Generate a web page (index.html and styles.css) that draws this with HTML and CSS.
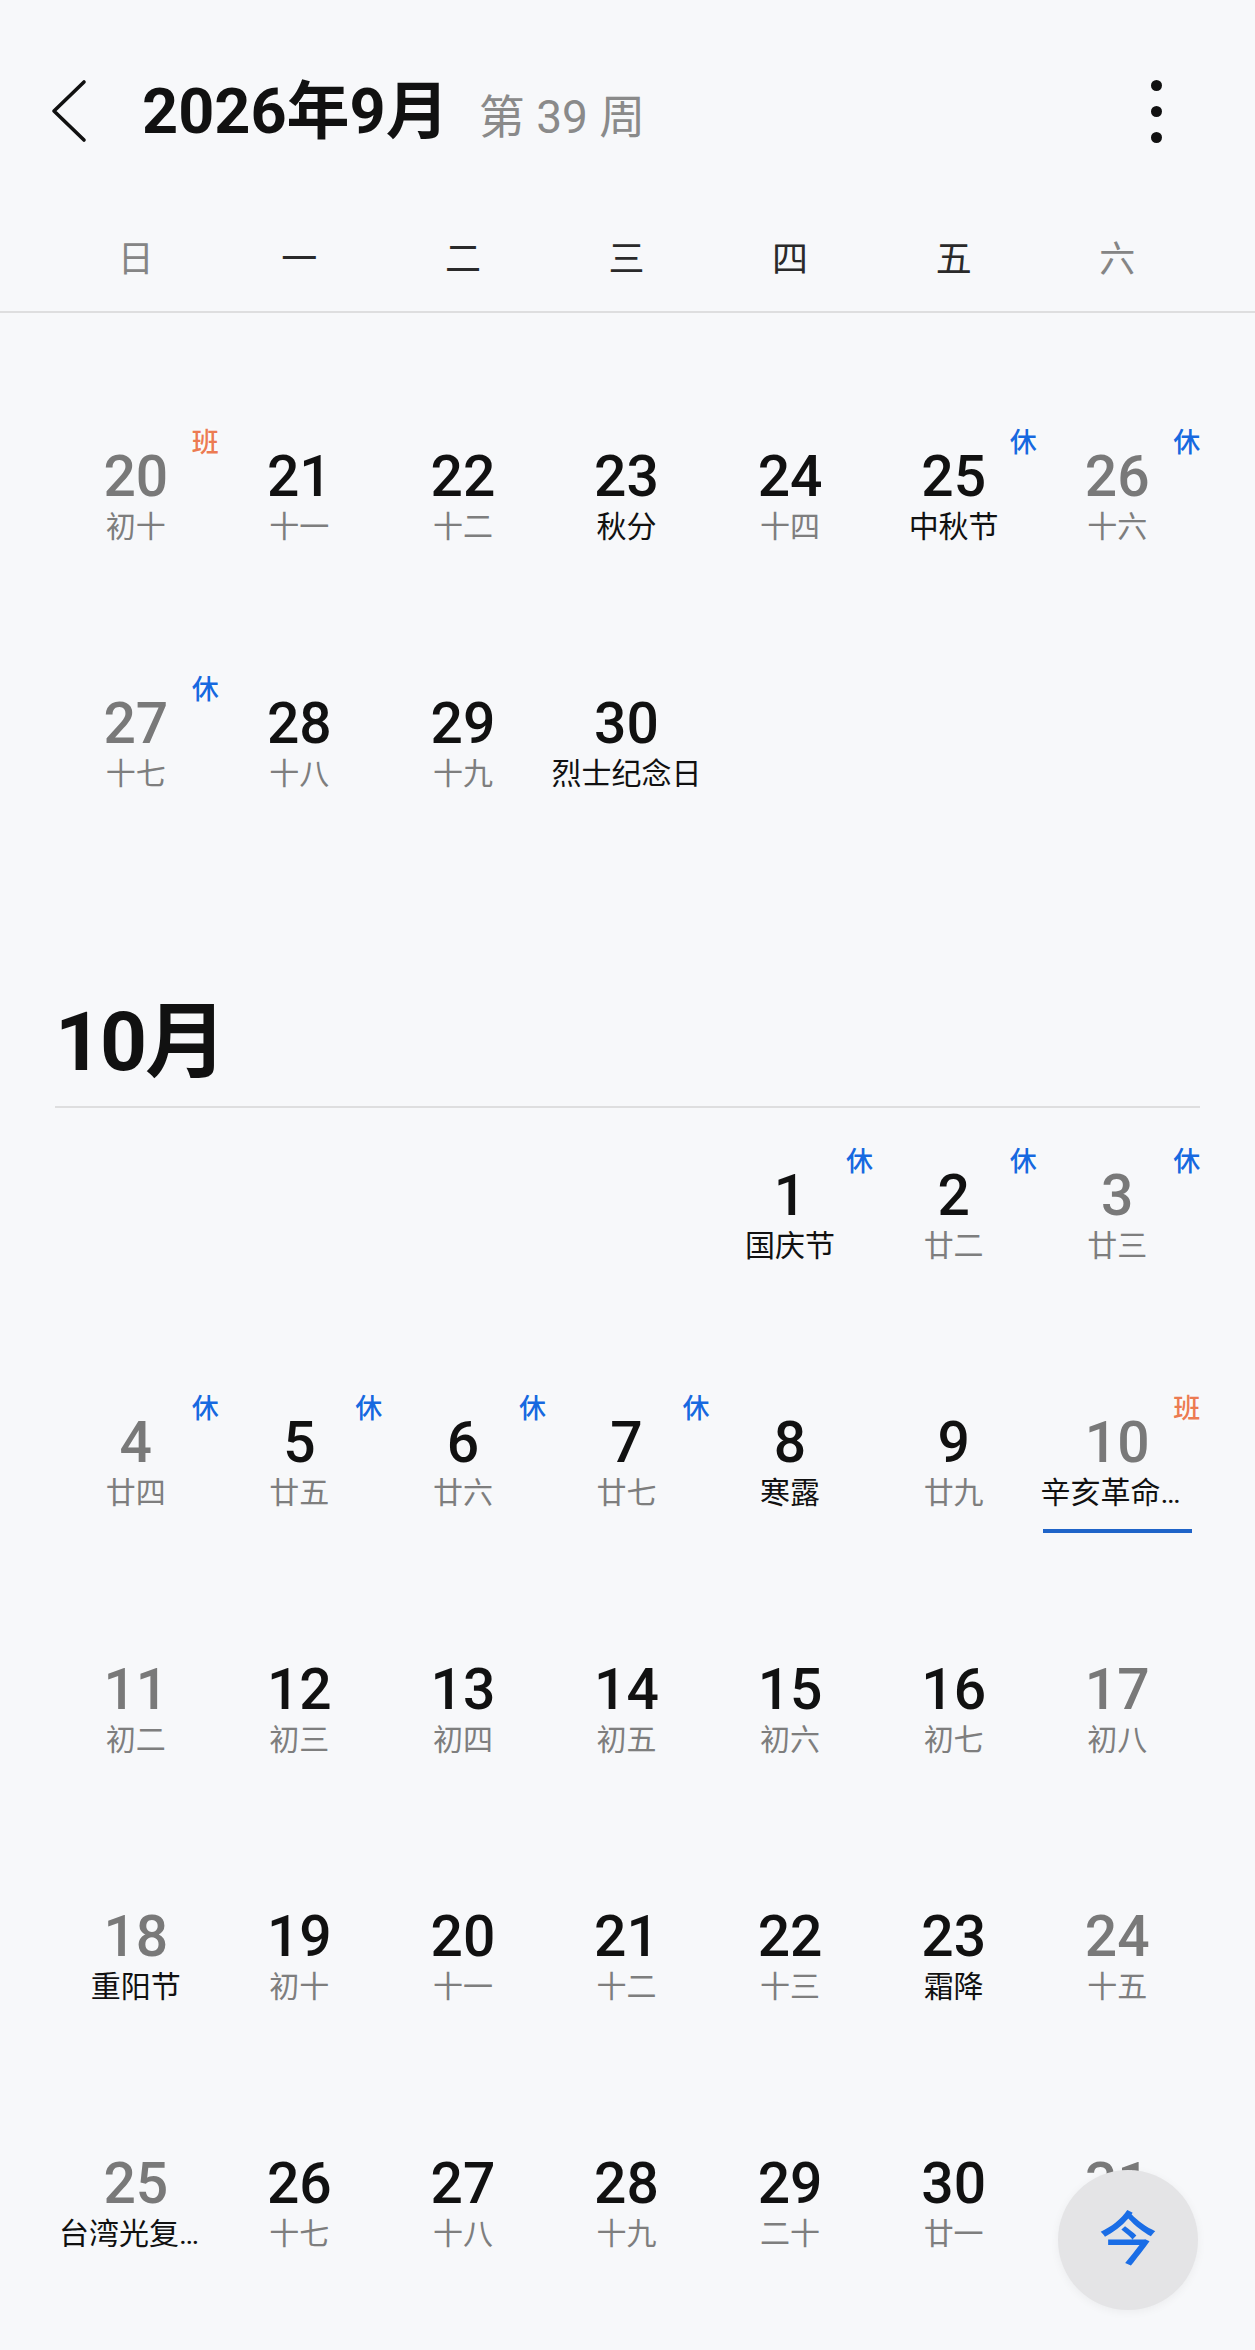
FILE: index.html
```html
<!DOCTYPE html>
<html lang="zh-CN">
<head>
<meta charset="utf-8">
<title>日历</title>
<link rel="stylesheet" href="styles.css">
</head>
<body>
<header class="topbar">
  <div class="back" aria-label="返回">
    <svg width="36" height="64" viewBox="0 0 36 64"><polyline points="33,3 3,32 33,61" fill="none" stroke="#111" stroke-width="3.6" stroke-linecap="round" stroke-linejoin="round"/></svg>
  </div>
  <div class="title-group">
    <h1 class="title">2026年9月</h1>
    <span class="week">第 39 周</span>
  </div>
  <div class="more" aria-label="更多"><span class="dot"></span><span class="dot"></span><span class="dot"></span></div>
</header>

<div class="weekdays">
  <div class="wd off">日</div><div class="wd">一</div><div class="wd">二</div><div class="wd">三</div><div class="wd">四</div><div class="wd">五</div><div class="wd off">六</div>
</div>

<section class="month month-sep">
  <div class="grid">
    <div class="cell"><span class="badge work">班</span><div class="num off">20</div><div class="lunar">初十</div></div>
    <div class="cell"><div class="num">21</div><div class="lunar">十一</div></div>
    <div class="cell"><div class="num">22</div><div class="lunar">十二</div></div>
    <div class="cell"><div class="num">23</div><div class="lunar fest">秋分</div></div>
    <div class="cell"><div class="num">24</div><div class="lunar">十四</div></div>
    <div class="cell"><span class="badge rest">休</span><div class="num">25</div><div class="lunar fest">中秋节</div></div>
    <div class="cell"><span class="badge rest">休</span><div class="num off">26</div><div class="lunar">十六</div></div>

    <div class="cell"><span class="badge rest">休</span><div class="num off">27</div><div class="lunar">十七</div></div>
    <div class="cell"><div class="num">28</div><div class="lunar">十八</div></div>
    <div class="cell"><div class="num">29</div><div class="lunar">十九</div></div>
    <div class="cell"><div class="num">30</div><div class="lunar fest">烈士纪念日</div></div>
    <div class="cell"></div>
    <div class="cell"></div>
    <div class="cell"></div>
  </div>
</section>

<section class="month month-oct">
  <h2 class="month-title">10月</h2>
  <div class="grid">
    <div class="cell"></div>
    <div class="cell"></div>
    <div class="cell"></div>
    <div class="cell"></div>
    <div class="cell"><span class="badge rest">休</span><div class="num">1</div><div class="lunar fest">国庆节</div></div>
    <div class="cell"><span class="badge rest">休</span><div class="num">2</div><div class="lunar">廿二</div></div>
    <div class="cell"><span class="badge rest">休</span><div class="num off">3</div><div class="lunar">廿三</div></div>

    <div class="cell"><span class="badge rest">休</span><div class="num off">4</div><div class="lunar">廿四</div></div>
    <div class="cell"><span class="badge rest">休</span><div class="num">5</div><div class="lunar">廿五</div></div>
    <div class="cell"><span class="badge rest">休</span><div class="num">6</div><div class="lunar">廿六</div></div>
    <div class="cell"><span class="badge rest">休</span><div class="num">7</div><div class="lunar">廿七</div></div>
    <div class="cell"><div class="num">8</div><div class="lunar fest">寒露</div></div>
    <div class="cell"><div class="num">9</div><div class="lunar">廿九</div></div>
    <div class="cell selected"><span class="badge work">班</span><div class="num off">10</div><div class="lunar fest">辛亥革命纪念日</div><div class="mark"></div></div>

    <div class="cell"><div class="num off">11</div><div class="lunar">初二</div></div>
    <div class="cell"><div class="num">12</div><div class="lunar">初三</div></div>
    <div class="cell"><div class="num">13</div><div class="lunar">初四</div></div>
    <div class="cell"><div class="num">14</div><div class="lunar">初五</div></div>
    <div class="cell"><div class="num">15</div><div class="lunar">初六</div></div>
    <div class="cell"><div class="num">16</div><div class="lunar">初七</div></div>
    <div class="cell"><div class="num off">17</div><div class="lunar">初八</div></div>

    <div class="cell"><div class="num off">18</div><div class="lunar fest">重阳节</div></div>
    <div class="cell"><div class="num">19</div><div class="lunar">初十</div></div>
    <div class="cell"><div class="num">20</div><div class="lunar">十一</div></div>
    <div class="cell"><div class="num">21</div><div class="lunar">十二</div></div>
    <div class="cell"><div class="num">22</div><div class="lunar">十三</div></div>
    <div class="cell"><div class="num">23</div><div class="lunar fest">霜降</div></div>
    <div class="cell"><div class="num off">24</div><div class="lunar">十五</div></div>

    <div class="cell"><div class="num off">25</div><div class="lunar fest">台湾光复纪念日</div></div>
    <div class="cell"><div class="num">26</div><div class="lunar">十七</div></div>
    <div class="cell"><div class="num">27</div><div class="lunar">十八</div></div>
    <div class="cell"><div class="num">28</div><div class="lunar">十九</div></div>
    <div class="cell"><div class="num">29</div><div class="lunar">二十</div></div>
    <div class="cell"><div class="num">30</div><div class="lunar">廿一</div></div>
    <div class="cell"><div class="num off">31</div><div class="lunar">廿二</div></div>
  </div>
</section>

<div class="today">今</div>
</body>
</html>
```

FILE: styles.css
```css
html, body {
  margin: 0;
  padding: 0;
}
body {
  background: #f7f8fa;
  width: 1255px;
  height: 2350px;
  position: relative;
  overflow: hidden;
  font-family: Roboto, "Noto Sans CJK SC", sans-serif;
  color: #111;
}

/* top bar */
.topbar {
  display: flex;
  align-items: center;
  height: 222px;
  padding-left: 51px;
  box-sizing: border-box;
}
.back {
  width: 36px;
  height: 64px;
  display: flex;
}
.title-group {
  display: flex;
  align-items: baseline;
  margin-left: 55px;
}
.title {
  margin: 0;
  font-size: 63px;
  font-weight: 700;
  line-height: 1;
  color: #111;
}
.week {
  margin-left: 30px;
  font-size: 46px;
  line-height: 1;
  color: #8a8a8a;
}
.more {
  margin-left: auto;
  margin-right: 93px;
  display: flex;
  flex-direction: column;
  gap: 15px;
}
.dot {
  width: 11px;
  height: 11px;
  border-radius: 50%;
  background: #111;
}

/* weekday header */
.weekdays {
  display: grid;
  grid-template-columns: repeat(7, 1fr);
  padding: 14px 56px 27px 54px;
  border-bottom: 2px solid #dededf;
}
.wd {
  text-align: center;
  font-size: 36px;
  line-height: 48px;
  color: #2a2a2a;
}
.wd.off {
  color: #858585;
}

/* month grids */
.month-sep {
  padding-top: 76px;
}
.grid {
  display: grid;
  grid-template-columns: repeat(7, 1fr);
  grid-auto-rows: 247px;
  padding: 0 56px 0 54px;
}
.cell {
  position: relative;
  padding-top: 58px;
  box-sizing: border-box;
  text-align: center;
  min-width: 0;
}
.num {
  font-size: 57px;
  font-weight: 500;
  line-height: 60px;
  color: #111;
}
.num.off {
  color: #797979;
}
.lunar {
  font-size: 30px;
  line-height: 40px;
  color: #7e7e7e;
  white-space: nowrap;
  overflow: hidden;
  text-overflow: ellipsis;
  padding: 0 5px;
}
.lunar.fest {
  color: #111;
}
.badge {
  position: absolute;
  top: 39px;
  left: calc(50% + 56px);
  font-size: 27px;
  line-height: 30px;
  font-weight: 500;
  text-shadow: 0 0 5px rgba(255, 255, 255, 0.9);
}
.badge.rest {
  color: #1769e0;
}
.badge.work {
  color: #ec7b52;
}
.mark {
  width: 149px;
  height: 4px;
  margin: 16px auto 0;
  background: #1f64c8;
}

.month-title {
  margin: 0 55px;
  padding: 109px 0 14px;
  font-size: 82px;
  font-weight: 700;
  line-height: 100px;
  letter-spacing: -2px;
  color: #111;
  border-bottom: 2px solid #dededf;
}

/* floating "today" button */
.today {
  position: absolute;
  left: 1058px;
  top: 2170px;
  width: 140px;
  height: 140px;
  border-radius: 50%;
  background: #e4e4e6;
  box-shadow: 0 2px 10px rgba(0, 0, 0, 0.05);
  display: flex;
  align-items: center;
  justify-content: center;
  font-size: 58px;
  font-weight: 500;
  color: #1a6de6;
  line-height: 1;
}
```
